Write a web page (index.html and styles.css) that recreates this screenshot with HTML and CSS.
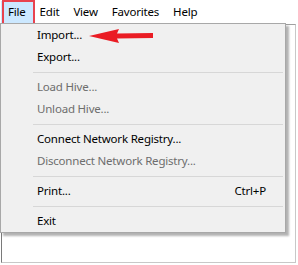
FILE: index.html
```html
<html>
    <head>
        <title>Registry Editor</title>
        <link rel="stylesheet" href="styles.css">
    </head>
    <body>
        <div class="window">
            <div class="menubar">
                <span class="top-item active">File</span>
                <span class="top-item">Edit</span>
                <span class="top-item">View</span>
                <span class="top-item">Favorites</span>
                <span class="top-item">Help</span>
            </div>
            <div class="client"></div>

            <div class="highlight"></div>

            <div class="dropdown">
                <div class="item">Import...</div>
                <div class="item">Export...</div>
                <div class="sep"></div>
                <div class="item disabled">Load Hive...</div>
                <div class="item disabled">Unload Hive...</div>
                <div class="sep"></div>
                <div class="item">Connect Network Registry...</div>
                <div class="item disabled">Disconnect Network Registry...</div>
                <div class="sep"></div>
                <div class="item"><span>Print...</span><span class="key">Ctrl+P</span></div>
                <div class="sep"></div>
                <div class="item">Exit</div>
            </div>

            <svg class="arrow" width="66" height="16" viewBox="0 0 66 16">
                <polygon points="0,8 30,1 28,5.5 64,5 64,10 28,10.5 30,15" fill="#ea1c24"/>
            </svg>
        </div>
    </body>
</html>
```

FILE: styles.css
```css
body {
    margin: 0;
    background: #fff;
    font-family: 'Noto Sans', sans-serif;
    font-size: 11.5px;
    letter-spacing: -0.2px;
    color: #000;
}
.window {
    position: relative;
    width: 298px;
    height: 265px;
}
.menubar {
    display: flex;
    height: 24px;
    align-items: center;
    padding-left: 1px;
}
.top-item {
    padding: 0 7px;
    line-height: 22px;
}
.top-item.active {
    background-color: #cce8ff;
}
.client {
    margin-left: 1px;
    width: 293px;
    height: 237px;
    border-top: 1px solid #a0a0a0;
    border-left: 1px solid #7a7a7a;
    border-right: 1px solid #c8c8c8;
    border-bottom: 1px solid #c8c8c8;
}
.highlight {
    position: absolute;
    left: 2px;
    top: 0;
    width: 29px;
    height: 22px;
    border: 2px solid #e8434f;
}
.dropdown {
    position: absolute;
    left: 0;
    top: 23px;
    width: 284px;
    background: #f0f0f0;
    border: 1px solid #a8a8a8;
    box-shadow: 3px 3px 2px rgba(0, 0, 0, 0.3);
}
.item {
    display: flex;
    justify-content: space-between;
    height: 22px;
    line-height: 22px;
    padding: 0 19px 0 36px;
}
.disabled {
    color: #6d6d6d;
}
.sep {
    height: 1px;
    margin: 4px 2px 3px 32px;
    background: #d7d7d7;
}
.arrow {
    position: absolute;
    left: 89px;
    top: 28px;
}
```
